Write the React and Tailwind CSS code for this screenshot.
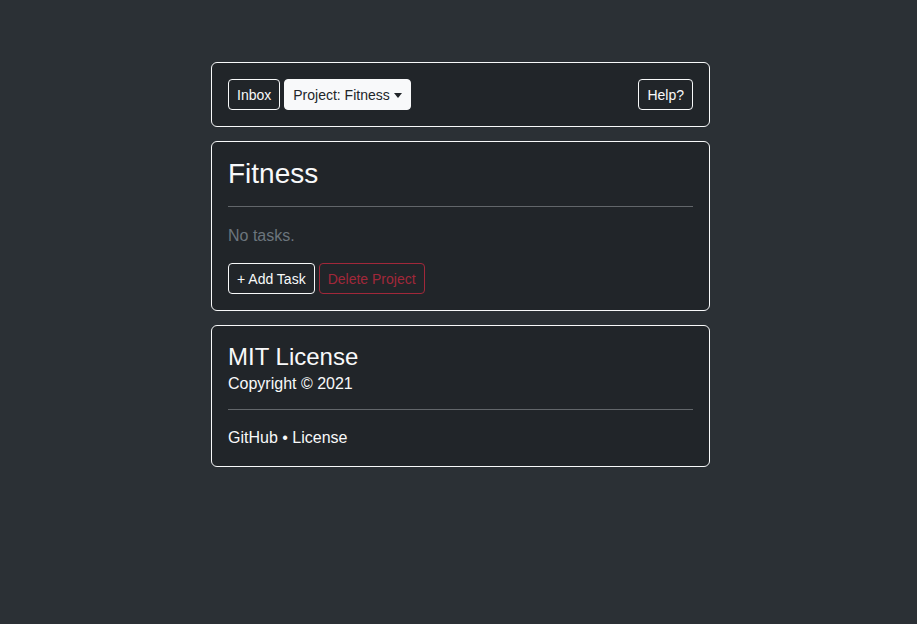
import React from 'react';

export default function App() {
  const font = { fontFamily: '"Liberation Sans", Arial, sans-serif' };

  return (
    <div className="min-h-[624px] bg-[#2b3035] text-[#f8f9fa] pt-[62px]" style={font}>
      <div className="ml-[211px] w-[499px] flex flex-col gap-[14px]">
        {/* Nav card */}
        <div className="bg-[#212529] border border-[#f8f9fa] rounded-[6px] p-4">
          <div className="flex items-center">
            <button className="h-[31px] px-2 pt-[2px] border border-[#f8f9fa] rounded-[4px] text-[14px] text-[#f8f9fa]">
              Inbox
            </button>
            <button className="ml-1 h-[31px] px-2 pt-[2px] border border-[#f8f9fa] bg-[#f8f9fa] rounded-[4px] text-[14px] text-[#212529] flex items-center">
              Project: Fitness
              <span className="ml-[4px] w-0 h-0 border-l-[4px] border-r-[4px] border-t-[5px] border-l-transparent border-r-transparent border-t-[#212529]" />
            </button>
            <button className="ml-auto h-[31px] px-2 pt-[2px] border border-[#f8f9fa] rounded-[4px] text-[14px] text-[#f8f9fa]">
              Help?
            </button>
          </div>
        </div>

        {/* Project card */}
        <div className="bg-[#212529] border border-[#f8f9fa] rounded-[6px] p-4">
          <h2 className="text-[28px] leading-[32px]">Fitness</h2>
          <hr className="mt-4 mb-[17px] border-t border-[#62666a]" />
          <p className="text-[16px] leading-6 text-[#6c757d]">No tasks.</p>
          <div className="mt-[15px] flex gap-1">
            <button className="h-[31px] px-2 pt-[2px] border border-[#f8f9fa] rounded-[4px] text-[14px] text-[#f8f9fa]">
              + Add Task
            </button>
            <button className="h-[31px] px-2 pt-[2px] border border-[#a1283a] rounded-[4px] text-[14px] text-[#a1283a]">
              Delete Project
            </button>
          </div>
        </div>

        {/* Footer card */}
        <div className="bg-[#212529] border border-[#f8f9fa] rounded-[6px] p-4">
          <h4 className="text-[24px] leading-[30px]">MIT License</h4>
          <p className="text-[16px] leading-6">Copyright © 2021</p>
          <hr className="mt-[13px] mb-4 border-t border-[#62666a]" />
          <p className="text-[16px] leading-6">GitHub • License</p>
        </div>
      </div>
    </div>
  );
}
